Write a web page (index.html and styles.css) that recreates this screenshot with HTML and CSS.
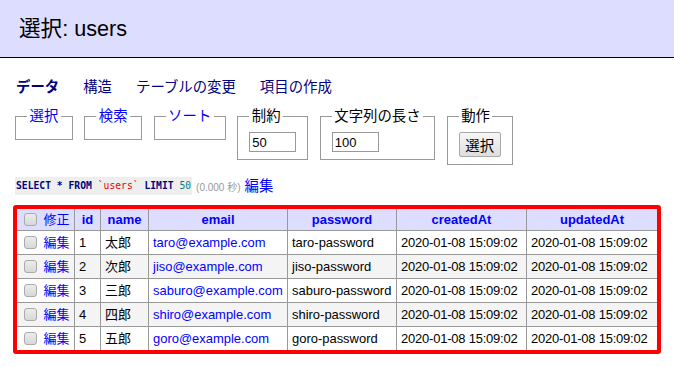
FILE: index.html
```html
<!DOCTYPE html>
<html lang="ja">
<head>
    <meta charset="UTF-8">
    <title>選択: users - Adminer</title>
    <link rel="stylesheet" href="styles.css">
</head>
<body>
    <!-- Header -->
    <h2 class="title">選択: users</h2>

    <div class="content">
        <!-- Table links -->
        <p class="links">
            <b>データ</b>
            <a href="#">構造</a>
            <a href="#">テーブルの変更</a>
            <a href="#">項目の作成</a>
        </p>

        <!-- Select form -->
        <form class="select-form">
            <fieldset class="empty"><legend><a href="#">選択</a></legend></fieldset>
            <fieldset class="empty"><legend><a href="#">検索</a></legend></fieldset>
            <fieldset class="empty"><legend><a href="#">ソート</a></legend></fieldset>
            <fieldset>
                <legend>制約</legend>
                <input type="number" class="num-input" value="50">
            </fieldset>
            <fieldset>
                <legend>文字列の長さ</legend>
                <input type="number" class="num-input" value="100">
            </fieldset>
            <fieldset>
                <legend>動作</legend>
                <input type="submit" class="btn" value="選択">
            </fieldset>
        </form>

        <!-- Query -->
        <p class="query">
            <code class="jush-sql"><a class="kw" href="#">SELECT</a> <span class="op">*</span> <a class="kw" href="#">FROM</a> <span class="bac">`users`</span> <a class="kw" href="#">LIMIT</a> <span class="num">50</span></code>
            <span class="time">(0.000 秒)</span>
            <a href="#" class="edit-query">編集</a>
        </p>

        <!-- Data table -->
        <table class="data-table">
            <colgroup>
                <col style="width: 58px">
                <col style="width: 26px">
                <col style="width: 48px">
                <col style="width: 139px">
                <col style="width: 109px">
                <col style="width: 130px">
                <col style="width: 130px">
            </colgroup>
            <thead>
                <tr>
                    <td class="check-cell"><input type="checkbox"> <a href="#">修正</a></td>
                    <th><a href="#">id</a></th>
                    <th><a href="#">name</a></th>
                    <th><a href="#">email</a></th>
                    <th><a href="#">password</a></th>
                    <th><a href="#">createdAt</a></th>
                    <th><a href="#">updatedAt</a></th>
                </tr>
            </thead>
            <tbody id="rows">
            </tbody>
        </table>
    </div>

    <script>
        // Sample rows
        const users = [
            { id: 1, name: "太郎", email: "taro@example.com", password: "taro-password" },
            { id: 2, name: "次郎", email: "jiso@example.com", password: "jiso-password" },
            { id: 3, name: "三郎", email: "saburo@example.com", password: "saburo-password" },
            { id: 4, name: "四郎", email: "shiro@example.com", password: "shiro-password" },
            { id: 5, name: "五郎", email: "goro@example.com", password: "goro-password" }
        ];
        const stamp = "2020-01-08 15:09:02";

        const rows = document.getElementById('rows');
        users.forEach(user => {
            const row = document.createElement('tr');
            row.innerHTML = `
                <td class="check-cell"><input type="checkbox"> <a href="#">編集</a></td>
                <td>${user.id}</td>
                <td>${user.name}</td>
                <td><a href="#">${user.email}</a></td>
                <td>${user.password}</td>
                <td class="date">${stamp}</td>
                <td class="date">${stamp}</td>
            `;
            rows.appendChild(row);
        });
    </script>
</body>
</html>
```

FILE: styles.css
```css
body {
    font-family: 'Liberation Sans', Arial, 'Noto Sans CJK JP', sans-serif;
    font-size: 14.4px;
    line-height: 18px;
    color: #000;
    background: #fff;
    margin: 0;
}

a {
    color: #00f;
    text-decoration: none;
}

.title {
    margin: 0;
    padding: 15px 19px;
    font-size: 21.6px;
    line-height: 27px;
    font-weight: normal;
    background: #ddf;
    border-bottom: 1px solid #000;
}

.content {
    padding: 0 15px;
}

/* Table links */
.links {
    margin: 20px 0 0 1px;
    display: flex;
    gap: 24px;
}

.links b,
.links a {
    color: #000080;
}

/* Select form */
.select-form {
    display: flex;
    align-items: flex-start;
    margin-top: 11px;
}

.select-form fieldset {
    margin: 0 11.5px 0 0;
    padding: 7px 11px;
    border: 1px solid #999;
}

.select-form legend {
    padding: 0 2.5px;
    line-height: 18px;
}

.num-input {
    box-sizing: border-box;
    width: 47px;
    height: 20px;
    margin: 0;
    padding: 1px 2px;
    border: 1px solid #999;
    font-family: 'Liberation Sans', Arial, sans-serif;
    font-size: 13px;
    -moz-appearance: textfield;
}

.num-input::-webkit-outer-spin-button,
.num-input::-webkit-inner-spin-button {
    -webkit-appearance: none;
    margin: 0;
}

.btn {
    box-sizing: border-box;
    width: 42px;
    height: 25px;
    margin: 0;
    padding: 0 5px;
    font-family: 'Liberation Sans', 'Noto Sans CJK JP', sans-serif;
    font-size: 14.4px;
    color: #000;
    background: linear-gradient(#f6f6f6, #dedede);
    border: 1px solid #a9a9a9;
    border-radius: 2px;
}

/* Query line */
.query {
    margin: 12px 0 0 0;
    line-height: 18px;
}

.query code {
    display: inline-block;
    background: #eee;
    padding: 0 1px;
    font-family: 'DejaVu Sans Mono', monospace;
    font-size: 9.7px;
    line-height: 18px;
    vertical-align: top;
}

.jush-sql .kw,
.jush-sql .op {
    color: #000080;
    font-weight: bold;
}

.jush-sql .bac {
    color: #e00;
}

.jush-sql .num {
    color: #007f7f;
}

.time {
    color: #999;
    font-size: 10px;
}

/* Data table */
.data-table {
    margin: 8px 0 0 -2px;
    width: 648px;
    table-layout: fixed;
    border-spacing: 0;
    border: 4px solid #f00;
    border-radius: 3px;
    font-size: 12.96px;
}

.data-table th,
.data-table td {
    padding: 3px 4px;
    line-height: 17px;
    white-space: nowrap;
    overflow: hidden;
    border-right: 1px solid #999;
    border-bottom: 1px solid #999;
    text-align: left;
}

.data-table th:last-child,
.data-table td:last-child {
    border-right: none;
}

.data-table tbody tr:last-child td {
    border-bottom: none;
}

.data-table thead th,
.data-table thead td {
    background: #ddf;
    padding: 2px 4px;
}

.data-table thead th {
    text-align: center;
    font-weight: bold;
}

.data-table tbody tr:nth-child(2n) {
    background: #f4f4f4;
}

.data-table input[type=checkbox] {
    -webkit-appearance: none;
    appearance: none;
    box-sizing: border-box;
    margin: 0 0 0 3px;
    width: 13px;
    height: 13px;
    vertical-align: -2px;
    background: linear-gradient(#ececec, #d8d8d8);
    border: 1px solid #aaa;
    border-radius: 3px;
}

.data-table .check-cell a {
    margin-left: 3px;
}

.data-table .date {
    letter-spacing: -0.2px;
}
```
